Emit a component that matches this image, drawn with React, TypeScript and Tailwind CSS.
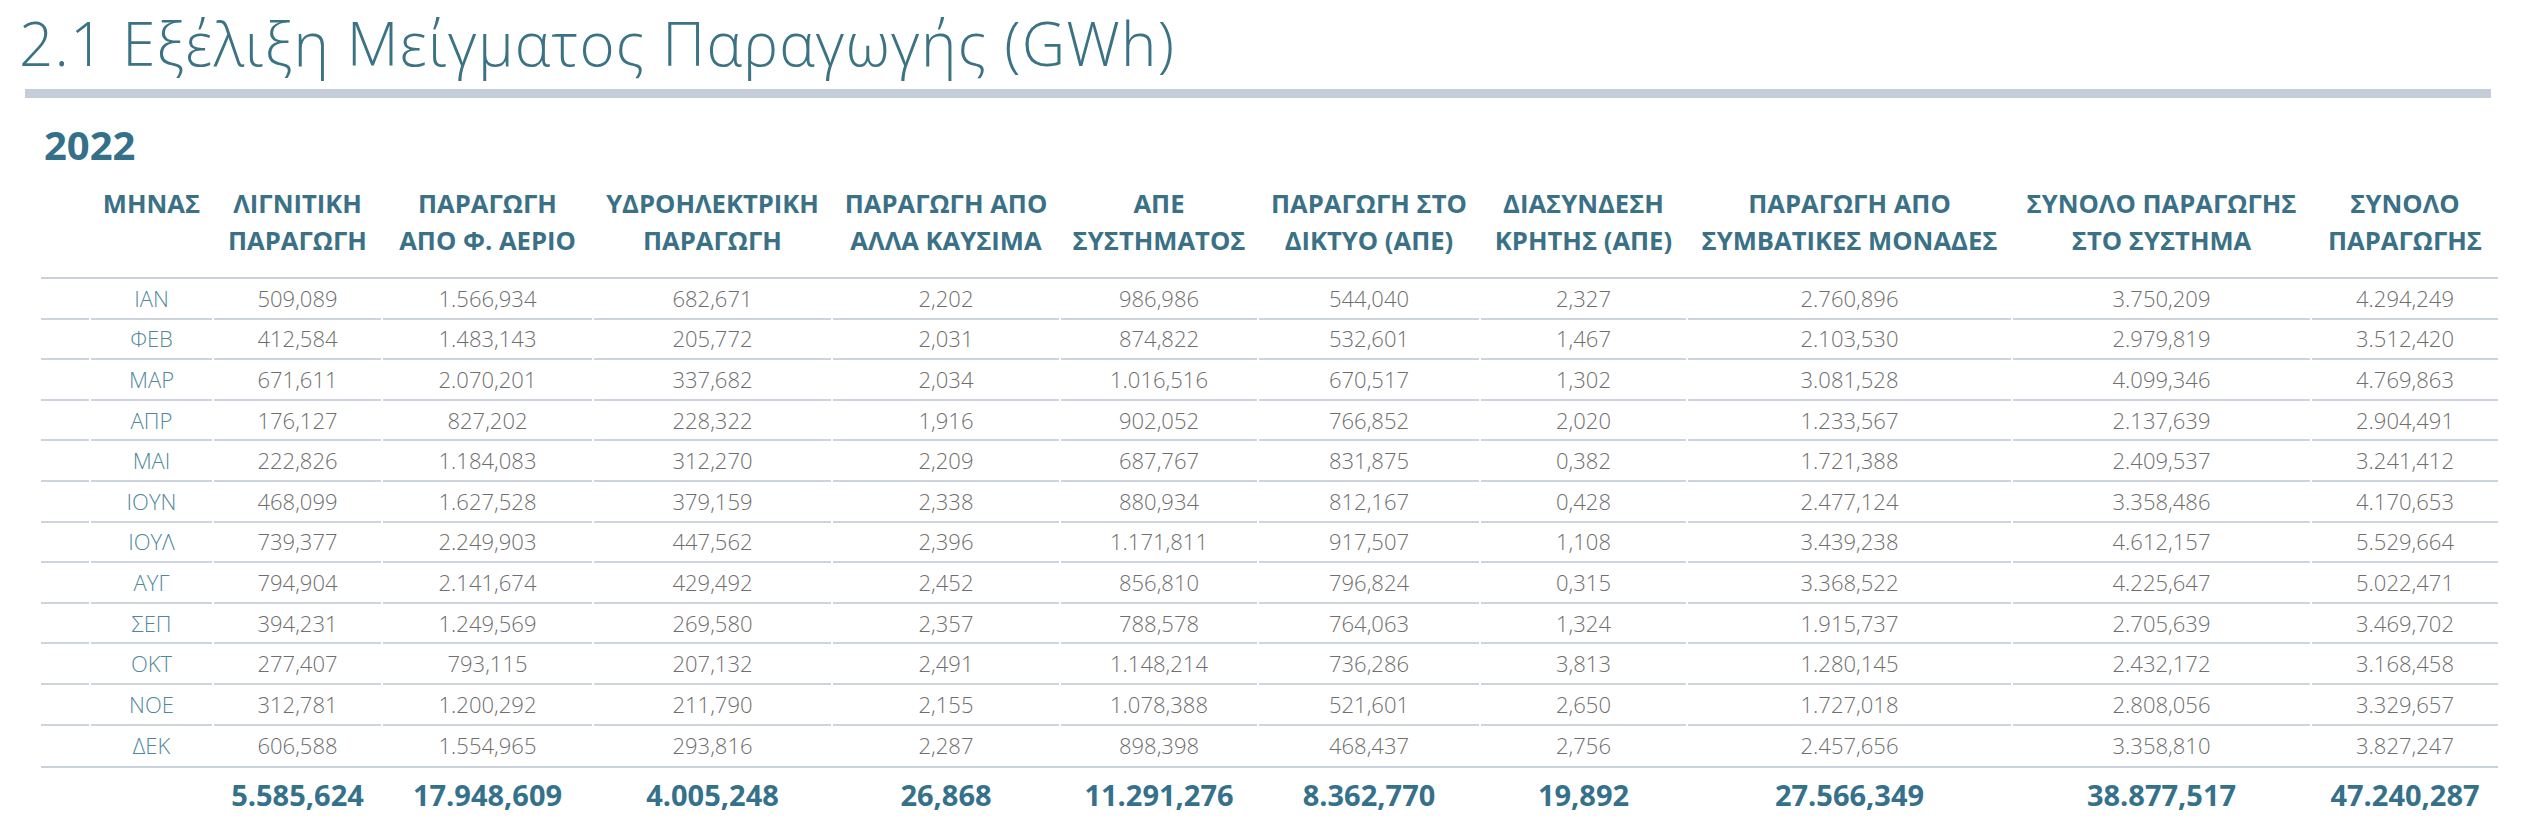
const headers = [
  "",
  "ΜΗΝΑΣ",
  "ΛΙΓΝΙΤΙΚΗ\nΠΑΡΑΓΩΓΗ",
  "ΠΑΡΑΓΩΓΗ\nΑΠΟ Φ. ΑΕΡΙΟ",
  "ΥΔΡΟΗΛΕΚΤΡΙΚΗ\nΠΑΡΑΓΩΓΗ",
  "ΠΑΡΑΓΩΓΗ ΑΠΟ\nΑΛΛΑ ΚΑΥΣΙΜΑ",
  "ΑΠΕ\nΣΥΣΤΗΜΑΤΟΣ",
  "ΠΑΡΑΓΩΓΗ ΣΤΟ\nΔΙΚΤΥΟ (ΑΠΕ)",
  "ΔΙΑΣΥΝΔΕΣΗ\nΚΡΗΤΗΣ (ΑΠΕ)",
  "ΠΑΡΑΓΩΓΗ ΑΠΟ\nΣΥΜΒΑΤΙΚΕΣ ΜΟΝΑΔΕΣ",
  "ΣΥΝΟΛΟ ΠΑΡΑΓΩΓΗΣ\nΣΤΟ ΣΥΣΤΗΜΑ",
  "ΣΥΝΟΛΟ\nΠΑΡΑΓΩΓΗΣ",
];

const rows = [
  ["ΙΑΝ", "509,089", "1.566,934", "682,671", "2,202", "986,986", "544,040", "2,327", "2.760,896", "3.750,209", "4.294,249"],
  ["ΦΕΒ", "412,584", "1.483,143", "205,772", "2,031", "874,822", "532,601", "1,467", "2.103,530", "2.979,819", "3.512,420"],
  ["ΜΑΡ", "671,611", "2.070,201", "337,682", "2,034", "1.016,516", "670,517", "1,302", "3.081,528", "4.099,346", "4.769,863"],
  ["ΑΠΡ", "176,127", "827,202", "228,322", "1,916", "902,052", "766,852", "2,020", "1.233,567", "2.137,639", "2.904,491"],
  ["ΜΑΙ", "222,826", "1.184,083", "312,270", "2,209", "687,767", "831,875", "0,382", "1.721,388", "2.409,537", "3.241,412"],
  ["ΙΟΥΝ", "468,099", "1.627,528", "379,159", "2,338", "880,934", "812,167", "0,428", "2.477,124", "3.358,486", "4.170,653"],
  ["ΙΟΥΛ", "739,377", "2.249,903", "447,562", "2,396", "1.171,811", "917,507", "1,108", "3.439,238", "4.612,157", "5.529,664"],
  ["ΑΥΓ", "794,904", "2.141,674", "429,492", "2,452", "856,810", "796,824", "0,315", "3.368,522", "4.225,647", "5.022,471"],
  ["ΣΕΠ", "394,231", "1.249,569", "269,580", "2,357", "788,578", "764,063", "1,324", "1.915,737", "2.705,639", "3.469,702"],
  ["ΟΚΤ", "277,407", "793,115", "207,132", "2,491", "1.148,214", "736,286", "3,813", "1.280,145", "2.432,172", "3.168,458"],
  ["ΝΟΕ", "312,781", "1.200,292", "211,790", "2,155", "1.078,388", "521,601", "2,650", "1.727,018", "2.808,056", "3.329,657"],
  ["ΔΕΚ", "606,588", "1.554,965", "293,816", "2,287", "898,398", "468,437", "2,756", "2.457,656", "3.358,810", "3.827,247"],
];

const totals = ["", "", "5.585,624", "17.948,609", "4.005,248", "26,868", "11.291,276", "8.362,770", "19,892", "27.566,349", "38.877,517", "47.240,287"];

// column widths measured off the reference, 2px gaps between cells
const grid = "grid grid-cols-[48px_121px_167px_209px_237px_226px_196px_220px_205px_323px_297px_186px] gap-x-[2px]";

export default function App() {
  return (
    <div className="w-[2528px] h-[840px] bg-white font-['Open_Sans',sans-serif] overflow-hidden">
      <h1 className="pt-[13px] pl-[19px] text-[60px] leading-[60px] tracking-[1.2px] font-light text-[#3b7384] whitespace-nowrap">
        2.1 Εξέλιξη Μείγματος Παραγωγής (GWh)
      </h1>
      <div className="mt-[16px] ml-[25px] w-[2466px] h-[9px] bg-[#c4cdd9]" />
      <div className="mt-[27px] ml-[44px] text-[40px] leading-[40px] font-bold text-[#35708a]">2022</div>

      <div className="ml-[41px] w-[2457px] mt-[20px]">
        <div className={`${grid} pb-[18px] border-b-2 border-[#c9d1dd]`}>
          {headers.map((h, i) => (
            <div
              key={i}
              className="whitespace-pre text-center text-[25.6px] leading-[37px] font-bold text-[#3a7186]"
            >
              {h}
            </div>
          ))}
        </div>

        {rows.map((r, ri) => {
          const last = ri === rows.length - 1;
          return (
            <div key={r[0]} className={`${grid} ${last ? "border-b-2 border-[#c9d1dd]" : ""}`}>
              {["", ...r].map((v, ci) => (
                <div
                  key={ci}
                  className={`h-[40.6px] flex items-center justify-center text-[22px] font-light whitespace-nowrap ${
                    last ? "" : "border-b-2 border-[#cdd4df]"
                  } ${ci === 1 ? "text-[#4f889c]" : "text-[#6e6e6e]"}`}
                >
                  {v}
                </div>
              ))}
            </div>
          );
        })}

        <div className={`${grid} h-[54px] items-center`}>
          {totals.map((t, i) => (
            <div key={i} className="text-center text-[29px] font-bold text-[#35718a] whitespace-nowrap">
              {t}
            </div>
          ))}
        </div>
      </div>
    </div>
  );
}
